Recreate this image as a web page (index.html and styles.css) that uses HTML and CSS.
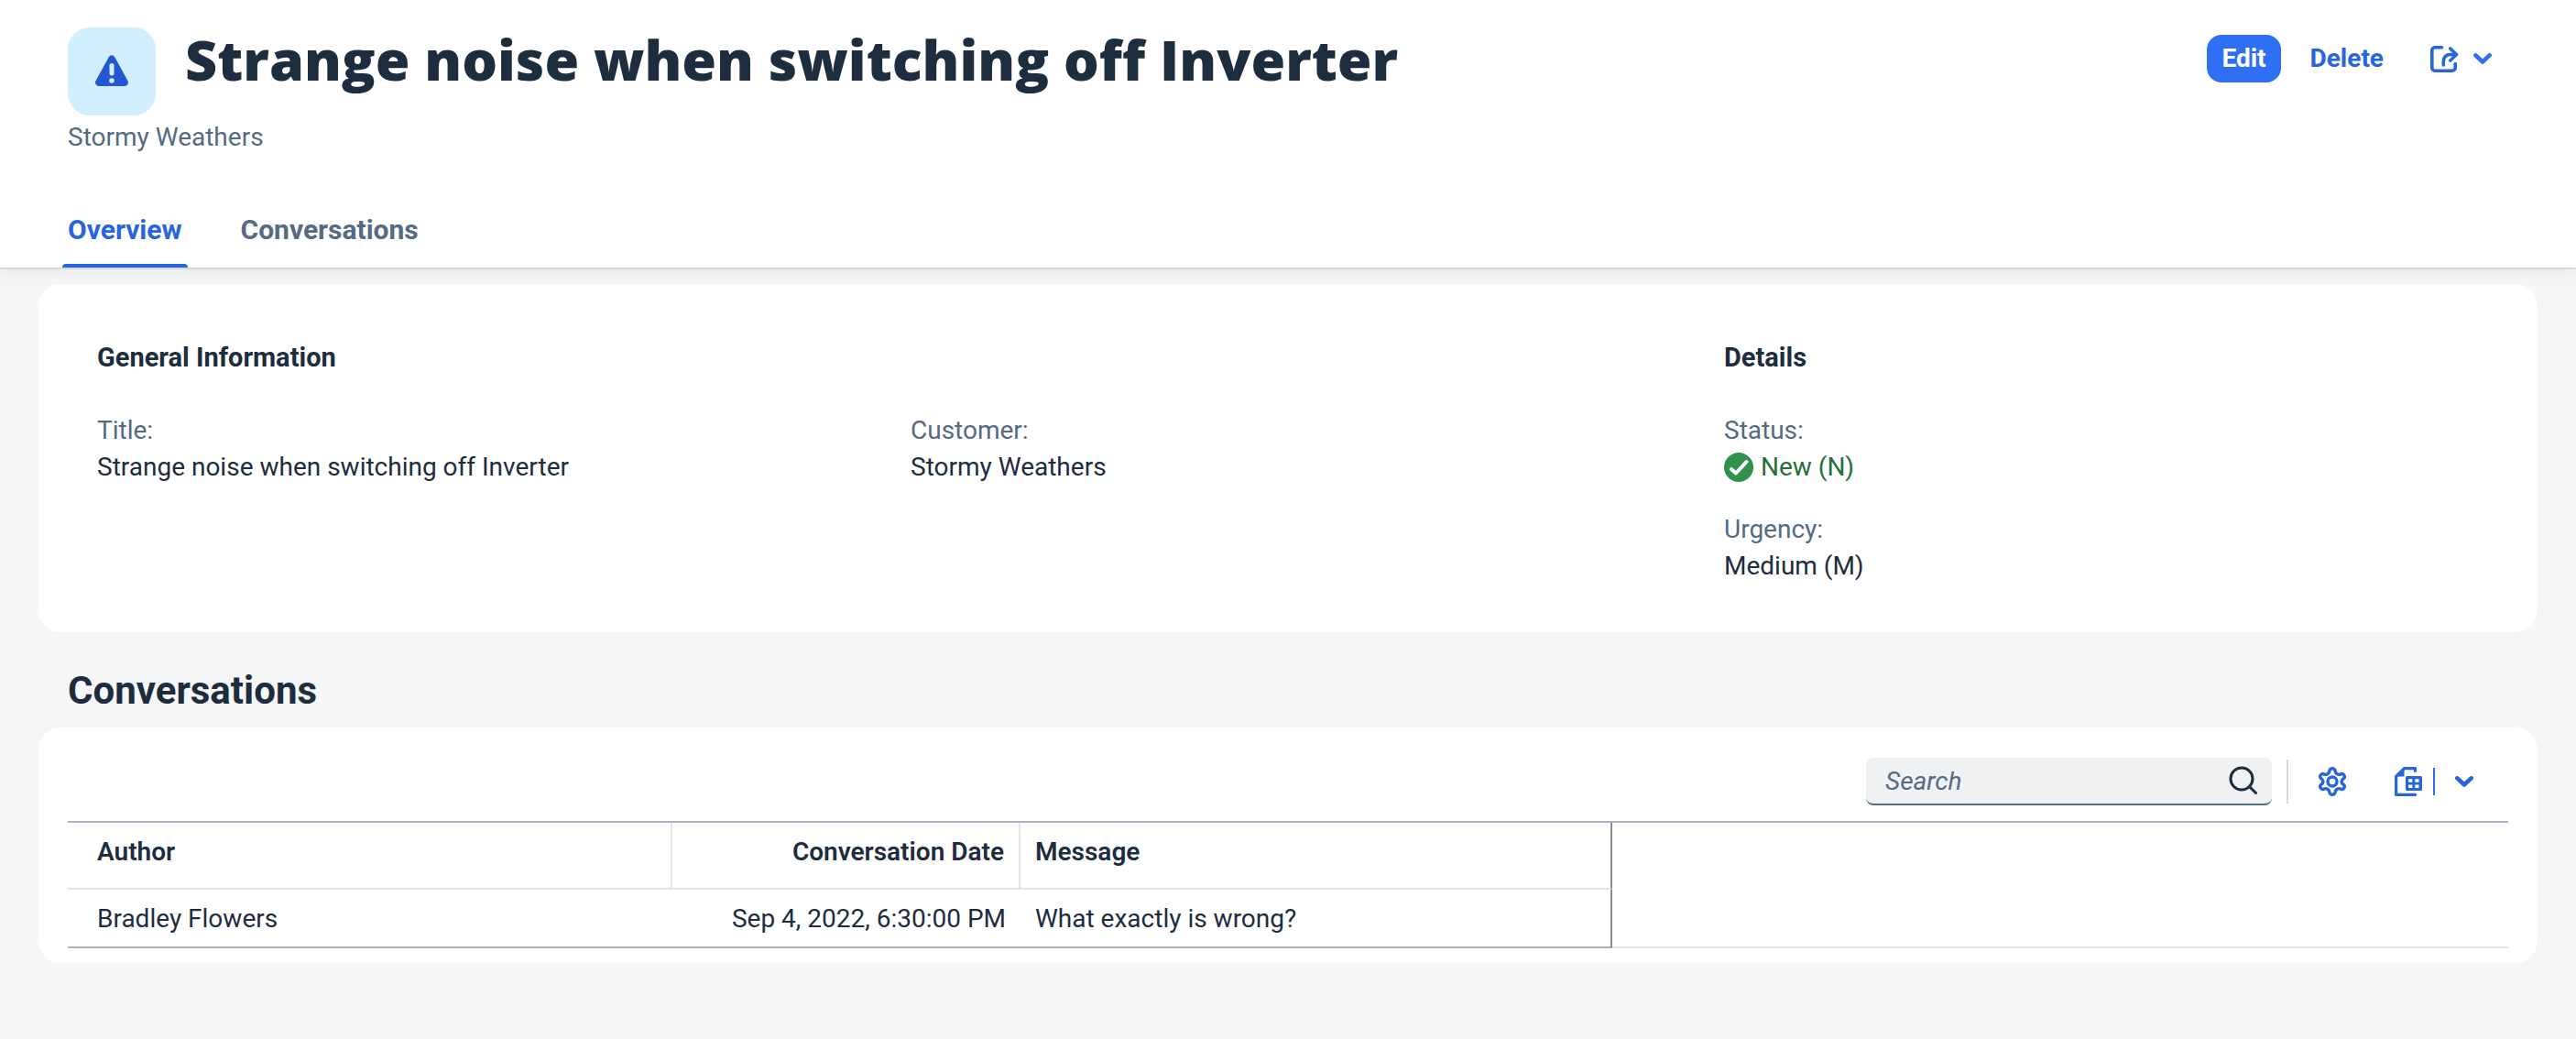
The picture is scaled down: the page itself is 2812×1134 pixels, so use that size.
FILE: index.html
```
<!DOCTYPE html>
<html lang="en">
<head>
<meta charset="utf-8">
<meta name="viewport" content="width=device-width, initial-scale=1">
<title>Strange noise when switching off Inverter</title>
<link rel="stylesheet" href="styles.css">
</head>
<body>
<header class="page-header">
  <div class="title-row">
    <div class="avatar">
      <svg width="36" height="34" viewBox="0 0 36 34" aria-hidden="true">
        <path d="M14.8 2.200a3.700 3.700 0 0 1 6.400 0L35.400 28a4 4 0 0 1-3.500 6H4.100a4 4 0 0 1-3.500-6z" fill="#2558d0"/>
        <path d="M18 11.500v8.500" stroke="#d1efff" stroke-width="5" stroke-linecap="round"/>
        <circle cx="18" cy="28" r="2.800" fill="#d1efff"/>
      </svg>
    </div>
    <h1 class="title">Strange noise when switching off Inverter</h1>
    <div class="actions">
      <button class="btn btn-primary" type="button">Edit</button>
      <button class="btn btn-text" type="button">Delete</button>
      <button class="btn btn-share" type="button" aria-label="Share">
        <svg width="32" height="30" viewBox="0 0 32 30" fill="none" stroke="currentColor" stroke-width="3.600" stroke-linecap="round" stroke-linejoin="round" aria-hidden="true">
          <path d="M13.500 2.800H6a3.200 3.200 0 0 0-3.200 3.200v19A3.200 3.200 0 0 0 6 28.200h19a3.200 3.200 0 0 0 3.200-3.200v-4.500"/>
          <path d="M15.300 22v-3.500q0-8 8-8H29"/>
          <path d="M22.800 4l6.700 6.500-6.700 6.500"/>
        </svg>
        <svg class="chevron" width="20" height="12" viewBox="0 0 20 12" aria-hidden="true"><path d="M2.400 2.400 10 9.500l7.600-7.100"/></svg>
      </button>
    </div>
  </div>
  <p class="subtitle">Stormy Weathers</p>
  <nav class="tabs">
    <a class="tab tab-active" href="#overview" aria-current="true">Overview</a>
    <a class="tab" href="#conversations">Conversations</a>
  </nav>
</header>

<main class="content">
  <section class="card info" id="overview">
    <div class="group group-wide">
      <h3 class="group-title">General Information</h3>
      <dl class="fields">
        <div class="field"><dt>Title:</dt><dd>Strange noise when switching off Inverter</dd></div>
        <div class="field"><dt>Customer:</dt><dd>Stormy Weathers</dd></div>
      </dl>
    </div>
    <div class="group">
      <h3 class="group-title">Details</h3>
      <dl class="fields fields-stacked">
        <div class="field">
          <dt>Status:</dt>
          <dd class="status">
            <svg width="32" height="32" viewBox="0 0 32 32" aria-hidden="true"><circle cx="16" cy="16" r="16" fill="#30914c"/><path d="M8 18l5 4.500L24.500 10" fill="none" stroke="#fff" stroke-width="4" stroke-linecap="round" stroke-linejoin="round"/></svg>
            New (N)
          </dd>
        </div>
        <div class="field"><dt>Urgency:</dt><dd>Medium (M)</dd></div>
      </dl>
    </div>
  </section>

  <section id="conversations">
    <h2 class="section-title">Conversations</h2>
    <div class="card table-card">
      <div class="toolbar">
        <div class="search">
          <input class="search-input" type="search" placeholder="Search" aria-label="Search">
          <button class="search-btn" type="button" aria-label="Start search">
            <svg width="32" height="32" viewBox="0 0 32 32" fill="none" stroke="#1d2d3e" stroke-width="3" stroke-linecap="round" aria-hidden="true"><circle cx="14" cy="14" r="12"/><path d="M22.500 22.500l7 7"/></svg>
          </button>
        </div>
        <span class="separator"></span>
        <button class="icon-btn btn-settings" type="button" aria-label="Settings">
          <svg width="32" height="34" viewBox="0 0 32 34" fill="none" stroke="currentColor" stroke-width="3.400" stroke-linejoin="round" aria-hidden="true">
            <path d="M13 5Q13.500 2.700 16 2.700T19 5Q19.500 8.500 22 9.200Q23.500 9.800 25.500 8.700Q27.700 8 28.900 10.200T28.300 13.700Q26 15.200 26 17T28.300 20.300Q30.100 21.700 28.900 23.800T25.500 25.300Q23.500 24.200 22 24.800Q19.500 25.500 19 29Q18.500 31.300 16 31.300T13 29Q12.500 25.500 10 24.800Q8.500 24.200 6.500 25.300Q4.300 26 3.100 23.800T3.700 20.300Q6 18.800 6 17T3.700 13.700Q1.900 12.300 3.100 10.200T6.500 8.700Q8.500 9.800 10 9.200Q12.500 8.500 13 5Z"/>
            <circle cx="16" cy="17" r="5"/>
          </svg>
        </button>
        <button class="icon-btn btn-export" type="button" aria-label="Export">
          <svg width="30" height="32" viewBox="0 0 30 32" aria-hidden="true">
            <path d="M22.500 4.500V1.600H10.500L1.600 10.500V30.400H22.500" fill="none" stroke="currentColor" stroke-width="3.200" stroke-linecap="round" stroke-linejoin="round"/>
            <path d="M10.500 1v9.500H1.500z" fill="currentColor"/>
            <path fill-rule="evenodd" fill="currentColor" d="M13.500 10h15a1.500 1.500 0 0 1 1.500 1.500v13a1.500 1.500 0 0 1-1.500 1.500h-15a1.500 1.500 0 0 1-1.500-1.500v-13a1.500 1.500 0 0 1 1.500-1.500zM15.200 13.200v3.500h4.200v-3.500zM22.300 13.200v3.500h4.200v-3.500zM15.200 19.500v3.500h4.200v-3.500zM22.300 19.500v3.500h4.200v-3.500z"/>
          </svg>
        </button>
        <span class="split"></span>
        <button class="icon-btn btn-menu" type="button" aria-label="Export options">
          <svg class="chevron" width="20" height="12" viewBox="0 0 20 12" aria-hidden="true"><path d="M2.400 2.400 10 9.500l7.600-7.100"/></svg>
        </button>
      </div>
      <table class="table">
        <colgroup><col class="col-author"><col class="col-date"><col class="col-message"><col></colgroup>
        <thead>
          <tr><th scope="col">Author</th><th scope="col" class="right">Conversation Date</th><th scope="col" class="last">Message</th><td class="filler"></td></tr>
        </thead>
        <tbody>
          <tr><td>Bradley Flowers</td><td class="right">Sep 4, 2022, 6:30:00 PM</td><td class="last">What exactly is wrong?</td><td class="filler"></td></tr>
        </tbody>
      </table>
    </div>
  </section>
</main>
</body>
</html>
```
FILE: styles.css
```
* {
  box-sizing: border-box;
}

body {
  margin: 0;
  background: #f5f6f7;
  color: #1d2d3e;
  font: 400 28px/40px Roboto, "Liberation Sans", sans-serif;
}

h1, h2, h3, p, dl, dd {
  margin: 0;
}

button {
  border: 0;
  padding: 0;
  background: none;
  color: #2864dc;
  font: inherit;
  cursor: pointer;
}

svg {
  display: block;
  flex: none;
}

.chevron {
  fill: none;
  stroke: #2864dc;
  stroke-width: 4.6;
  stroke-linecap: round;
  stroke-linejoin: round;
}

/* Header */
.page-header {
  padding: 30px 74px 0;
  background: #fff;
  border-bottom: 2px solid #d9d9d9;
  box-shadow: 0 2px 12px rgba(34, 53, 72, 0.08);
}

.title-row {
  display: flex;
  align-items: flex-start;
  gap: 32px;
}

.avatar {
  display: flex;
  flex: none;
  align-items: center;
  justify-content: center;
  width: 96px;
  height: 96px;
  padding-bottom: 2px;
  border-radius: 24px;
  background: #d1efff;
}

.title {
  flex: 1;
  font: 800 61px/70px "Open Sans", "Noto Sans", sans-serif;
}

.actions {
  display: flex;
  align-items: center;
  gap: 16px;
  padding-top: 8px;
}

.btn {
  display: flex;
  align-items: center;
  height: 52px;
  padding: 0 16px;
  border-radius: 16px;
  font-weight: 700;
}

.btn-primary {
  background: #2f6ff3;
  color: #fff;
}

.btn-share {
  gap: 16px;
  padding: 0 18px;
}

.btn-share .chevron {
  stroke: #2f6ff3;
}

.subtitle {
  margin-top: 4px;
  color: #556b82;
}

.tabs {
  display: flex;
  gap: 52px;
  margin: 61px -6px 0;
}

.tab {
  padding: 0 6px 17px;
  border-bottom: 4px solid transparent;
  color: #556b82;
  font-size: 30px;
  font-weight: 700;
  text-decoration: none;
}

.tab-active {
  position: relative;
  color: #2864dc;
}

.tab-active::after {
  content: "";
  position: absolute;
  inset: auto 0 -4px;
  height: 4px;
  border-radius: 4px 4px 0 0;
  background: #2864dc;
}

/* Content */
.content {
  padding: 16px 42px 82px;
}

.card {
  border-radius: 24px;
  background: #fff;
}

.info {
  display: grid;
  grid-template-columns: 2fr 1fr;
  padding: 60px 0 52px 64px;
}

.group-title {
  margin-bottom: 40px;
  font-size: 29px;
  line-height: 40px;
  font-weight: 700;
}

.fields {
  display: grid;
  grid-template-columns: 1fr 1fr;
}

.fields-stacked {
  grid-template-columns: 1fr;
  row-gap: 28px;
}

dt {
  color: #556b82;
}

.status {
  display: flex;
  align-items: center;
  gap: 8px;
  color: #256f3a;
}

.section-title {
  padding: 36px 32px 12px;
  font-size: 42px;
  line-height: 56px;
  font-weight: 700;
}

.table-card {
  padding: 33px 32px 16px;
}

/* Table toolbar */
.toolbar {
  display: flex;
  align-items: center;
  justify-content: flex-end;
  height: 52px;
  margin-bottom: 17px;
  padding-right: 16px;
}

.search {
  display: flex;
  align-items: center;
  width: 443px;
  height: 52px;
  border-bottom: 2px solid #556b82;
  border-radius: 8px;
  background: #eff1f2;
}

.search-input {
  flex: 1;
  min-width: 0;
  height: 50px;
  padding: 0 0 0 21px;
  border: 0;
  outline: 0;
  background: none;
  color: inherit;
  font: inherit;
  appearance: none;
}

.search-input::placeholder {
  color: #556b82;
  font-style: italic;
  opacity: 1;
}

.search-btn {
  padding: 0 15px;
}

.separator {
  width: 2px;
  height: 48px;
  margin: 0 16px;
  background: #d9d9d9;
}

.icon-btn {
  display: flex;
  align-items: center;
  justify-content: center;
  height: 52px;
}

.btn-settings,
.btn-menu {
  width: 64px;
}

.btn-export {
  width: 54px;
  margin-left: 24px;
}

.split {
  width: 2px;
  height: 30px;
  background: #2f6ff3;
}

/* Table */
.table {
  width: 100%;
  border-top: 2px solid #a8b3bf;
  border-spacing: 0;
  table-layout: fixed;
}

.col-author {
  width: 660px;
}

.col-date {
  width: 380px;
}

.col-message {
  width: 646px;
}

.table th,
.table td {
  padding: 12px 16px 10px;
  text-align: left;
}

.table th {
  padding-bottom: 19px;
  border-right: 2px solid #e5e5e5;
  border-bottom: 2px solid #e5e5e5;
  font-weight: 600;
}

.table tbody td {
  border-bottom: 2px solid #a8b3bf;
}

.table th:first-child,
.table td:first-child {
  padding-left: 32px;
}

.table .right {
  text-align: right;
}

.table .last {
  border-right: 2px solid #8c8c8c;
}

.table tbody .filler {
  border-bottom-color: #e5e5e5;
}
```
